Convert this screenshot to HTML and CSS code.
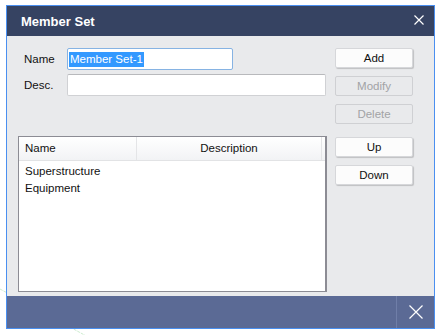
FILE: index.html
```html
<!DOCTYPE html>
<html>
<head>
    <title>Member Set</title>
    <link rel="stylesheet" href="styles.css">
</head>
<body>
    <svg class="backdrop" width="439" height="335">
        <line x1="0" y1="289" x2="90" y2="338" stroke="#cdeccf" stroke-width="1" stroke-dasharray="3 1"/>
    </svg>
    <div class="dialog">
        <div class="title-bar">
            <span class="title">Member Set</span>
            <svg class="close-icon" width="10" height="10" viewBox="0 0 10 10">
                <path d="M0.5 0.5 L9.5 9.5 M9.5 0.5 L0.5 9.5" stroke="#fff" stroke-width="1.2"/>
            </svg>
        </div>
        <div class="dialog-body">
            <div class="left-col">
                <div class="field-row">
                    <label>Name</label>
                    <div class="text-box name-box"><span class="selected">Member Set-1</span></div>
                </div>
                <div class="field-row">
                    <label>Desc.</label>
                    <div class="text-box desc-box"></div>
                </div>
                <div class="list-view">
                    <div class="list-header">
                        <div class="col-name">Name</div>
                        <div class="col-desc">Description</div>
                        <div class="col-rest"></div>
                    </div>
                    <div class="list-rows">
                        <div class="list-row">Superstructure</div>
                        <div class="list-row">Equipment</div>
                    </div>
                </div>
            </div>
            <div class="button-col">
                <button class="btn">Add</button>
                <button class="btn" disabled>Modify</button>
                <button class="btn" disabled>Delete</button>
                <button class="btn btn-gap">Up</button>
                <button class="btn">Down</button>
            </div>
        </div>
        <div class="footer">
            <div class="footer-close">
                <svg width="14" height="14" viewBox="0 0 14 14">
                    <path d="M0.5 0.5 L13.5 13.5 M13.5 0.5 L0.5 13.5" stroke="#fff" stroke-width="1.2"/>
                </svg>
            </div>
        </div>
    </div>
</body>
</html>
```

FILE: styles.css
```css
body {
    margin: 0;
    background: #ffffff;
    font-family: 'Liberation Sans', Arial, sans-serif;
    font-size: 11.5px;
    color: #111;
}
.backdrop {
    position: absolute;
    left: 0;
    top: 0;
}
.dialog {
    position: relative;
    margin: 5px 0 0 6px;
    width: 427px;
    border: 1px solid #4a8ff0;
    background: #e9eaec;
}
.title-bar {
    height: 30px;
    background: #364362;
    display: flex;
    align-items: center;
    justify-content: space-between;
    padding: 0 10px 0 14px;
}
.title {
    color: #fff;
    font-weight: bold;
    font-size: 13px;
}
.close-icon {
    margin-top: -2px;
}
.dialog-body {
    height: 260px;
    box-sizing: border-box;
    padding: 12px 18px 4px 11px;
    display: flex;
    gap: 8px;
}
.left-col {
    width: 309px;
    display: flex;
    flex-direction: column;
}
.field-row {
    display: flex;
    align-items: center;
    height: 22px;
}
.field-row + .field-row {
    margin-top: 4px;
}
.field-row label {
    width: 43px;
    padding-left: 6px;
}
.text-box {
    height: 22px;
    box-sizing: border-box;
    background: #fff;
    border: 1px solid #d0d1d4;
    border-top-color: #b8b9bc;
    border-radius: 2px;
    display: flex;
    align-items: center;
    padding-left: 1px;
}
.name-box {
    width: 166px;
    border-color: #86b3e3;
}
.desc-box {
    width: 259px;
}
.selected {
    background: #3399ff;
    color: #fff;
    line-height: 15px;
    padding: 0 1px;
}
.list-view {
    margin-top: 40px;
    flex: 1;
    background: #fff;
    border: 1px solid #8c8c94;
    border-right: 2px solid #8c8c94;
    display: flex;
    flex-direction: column;
}
.list-header {
    height: 23px;
    display: flex;
    background: linear-gradient(#ffffff, #f2f3f5);
    border-bottom: 1px solid #e2e3e5;
}
.col-name {
    width: 111px;
    padding-left: 6px;
    line-height: 23px;
    border-right: 1px solid #e4e5e7;
}
.col-desc {
    width: 184px;
    text-align: center;
    line-height: 23px;
    border-right: 1px solid #e4e5e7;
}
.col-rest {
    flex: 1;
}
.list-rows {
    padding-top: 2px;
}
.list-row {
    height: 17px;
    line-height: 17px;
    padding-left: 6px;
}
.button-col {
    display: flex;
    flex-direction: column;
    gap: 8px;
}
.btn {
    width: 78px;
    height: 20px;
    padding: 0;
    font-family: inherit;
    font-size: 11.5px;
    color: #111;
    background: #fcfcfc;
    border: 1px solid #d6d7da;
    border-radius: 2px;
    box-shadow: 1px 1px 1px rgba(0,0,0,0.18);
}
.btn:disabled {
    background: #e9eaec;
    color: #a2a3a6;
    border-color: #cfd0d3;
    box-shadow: none;
}
.btn-gap {
    margin-top: 5px;
}
.footer {
    height: 32px;
    background: #5b6a95;
    display: flex;
    justify-content: flex-end;
}
.footer-close {
    width: 37px;
    border-left: 1px solid #6f7ea8;
    display: flex;
    align-items: center;
    justify-content: center;
}
```
